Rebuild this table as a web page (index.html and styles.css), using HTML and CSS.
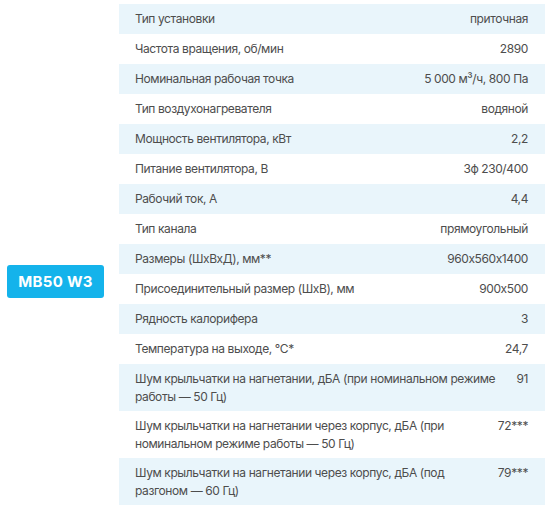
FILE: index.html
```html
<!DOCTYPE html>
<html lang="ru">
<head>
<meta charset="utf-8">
<link rel="stylesheet" href="styles.css">
</head>
<body>
<div class="wrap">
  <div class="side">
    <div class="badge">MB50 W3</div>
  </div>
  <div class="specs">
    <div class="row"><span class="k">Тип установки</span><span class="v">приточная</span></div>
    <div class="row"><span class="k">Частота вращения, об/мин</span><span class="v">2890</span></div>
    <div class="row"><span class="k">Номинальная рабочая точка</span><span class="v">5 000 м³/ч, 800 Па</span></div>
    <div class="row"><span class="k">Тип воздухонагревателя</span><span class="v">водяной</span></div>
    <div class="row"><span class="k">Мощность вентилятора, кВт</span><span class="v">2,2</span></div>
    <div class="row"><span class="k">Питание вентилятора, В</span><span class="v">3ф 230/400</span></div>
    <div class="row"><span class="k">Рабочий ток, А</span><span class="v">4,4</span></div>
    <div class="row"><span class="k">Тип канала</span><span class="v">прямоугольный</span></div>
    <div class="row"><span class="k">Размеры (ШхВхД), мм**</span><span class="v">960x560x1400</span></div>
    <div class="row"><span class="k">Присоединительный размер (ШхВ), мм</span><span class="v">900x500</span></div>
    <div class="row"><span class="k">Рядность калорифера</span><span class="v">3</span></div>
    <div class="row"><span class="k">Температура на выходе, °С*</span><span class="v">24,7</span></div>
    <div class="row tall"><span class="k">Шум крыльчатки на нагнетании, дБА (при номинальном режиме<br>работы — 50 Гц)</span><span class="v">91</span></div>
    <div class="row tall"><span class="k">Шум крыльчатки на нагнетании через корпус, дБА (при<br>номинальном режиме работы — 50 Гц)</span><span class="v">72***</span></div>
    <div class="row tall"><span class="k">Шум крыльчатки на нагнетании через корпус, дБА (под<br>разгоном — 60 Гц)</span><span class="v">79***</span></div>
  </div>
</div>
</body>
</html>
```
FILE: styles.css
```css
html, body {
  margin: 0;
  padding: 0;
  background: #ffffff;
}
body {
  font-family: Inter, "Noto Sans", sans-serif;
  color: #4d4d4d;
}
.wrap {
  display: flex;
  padding: 4px 8px 0 7px;
}
.side {
  width: 112px;
  flex: none;
  display: flex;
  align-items: center;
}
.badge {
  width: 97px;
  height: 33px;
  margin-top: 54px;
  box-sizing: border-box;
  background: #14b3eb;
  color: #ffffff;
  border-radius: 3px;
  font-weight: 700;
  font-size: 15px;
  display: flex;
  align-items: center;
  justify-content: center;
  letter-spacing: 0.3px;
}
.specs {
  width: 426px;
  flex: none;
}
.row {
  display: flex;
  justify-content: space-between;
  align-items: center;
  min-height: 30px;
  padding: 0 17px 0 16px;
  font-size: 12px;
  line-height: 18px;
  letter-spacing: -0.4px;
}
.row:nth-child(odd) {
  background: #e9f5fb;
}
.row.tall {
  height: 47px;
  align-items: flex-start;
  padding-top: 6px;
  box-sizing: border-box;
}
.k {
  white-space: nowrap;
}
.v {
  text-align: right;
  white-space: nowrap;
  margin-left: 12px;
}
```
